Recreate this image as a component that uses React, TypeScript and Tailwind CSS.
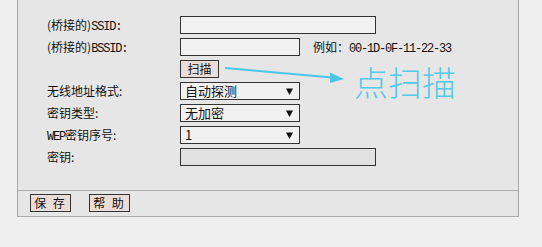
import React from "react";

const cjk = "font-['Noto_Sans_CJK_SC',sans-serif]";
const mono = "font-['Liberation_Mono','Noto_Sans_CJK_SC',monospace] tracking-[-1.2px]";

function Latin({ children }: { children: React.ReactNode }) {
  return <span className={mono}>{children}</span>;
}

function Row({ label, children }: { label: React.ReactNode; children: React.ReactNode }) {
  return (
    <div className="flex h-[22px] items-start">
      <div className="w-[133px] leading-[18px] text-[12px] text-[#111]">{label}</div>
      <div className="flex items-start">{children}</div>
    </div>
  );
}

function Select({ value }: { value: string }) {
  return (
    <div className="flex h-[18px] w-[120px] items-center justify-between border border-[#333] bg-[#f1f1f1] pl-[4px] pr-[6px] text-[13px] leading-[16px] text-[#111]">
      <span>{value}</span>
      <svg width="7" height="7" viewBox="0 0 7 7">
        <polygon points="0,0.5 7,0.5 3.5,7" fill="#111" />
      </svg>
    </div>
  );
}

export default function App() {
  return (
    <div className={`relative h-[247px] w-[542px] overflow-hidden bg-[#efefef] ${cjk}`}>
      <div className="ml-[17px] w-[502px] border-x border-b border-[#a9a9a9] bg-[#e6e6e6]">
        <div className="pl-[29px] pt-[16px] pb-[20px]">
          <Row label={<>(桥接的)<Latin>SSID:</Latin></>}>
            <div className="h-[18px] w-[196px] border border-[#333] bg-[#f2f2f2]" />
          </Row>
          <Row label={<>(桥接的)<Latin>BSSID:</Latin></>}>
            <div className="h-[18px] w-[120px] border border-[#333] bg-[#f2f2f2]" />
            <span className="ml-[13px] text-[12px] leading-[18px] text-[#111]">
              例如：<Latin>00-1D-0F-11-22-33</Latin>
            </span>
          </Row>
          <Row label="">
            <div className="flex h-[18px] w-[39px] items-center justify-center border border-[#333] bg-[#eadcd8] text-[12px] leading-none text-[#111]">
              扫描
            </div>
          </Row>
          <Row label="无线地址格式:">
            <Select value="自动探测" />
          </Row>
          <Row label="密钥类型:">
            <Select value="无加密" />
          </Row>
          <Row label={<><Latin>WEP</Latin>密钥序号:</>}>
            <Select value="1" />
          </Row>
          <Row label="密钥:">
            <div className="h-[18px] w-[196px] border border-[#333] bg-[#e1e1e1]" />
          </Row>
        </div>
        <div className="flex gap-[18px] border-t border-[#acacac] pl-[12px] pt-[3px] pb-[4px]">
          <div className="flex h-[18px] w-[41px] items-center justify-center border border-[#333] bg-[#eadcd8] text-[12px] leading-none tracking-[2px] text-[#111]">
            保 存
          </div>
          <div className="flex h-[18px] w-[41px] items-center justify-center border border-[#333] bg-[#eadcd8] text-[12px] leading-none tracking-[2px] text-[#111]">
            帮 助
          </div>
        </div>
      </div>

      <svg className="absolute left-0 top-0" width="542" height="247" viewBox="0 0 542 247">
        <line x1="225" y1="68" x2="332" y2="77.5" stroke="#4cc6e6" strokeWidth="2.2" />
        <polygon points="344,79 330,72.5 330,83" fill="#4cc6e6" />
      </svg>
      <div className="absolute left-[354px] top-[65px] text-[34px] font-light leading-none text-[#55c8e8]">
        点扫描
      </div>
    </div>
  );
}
